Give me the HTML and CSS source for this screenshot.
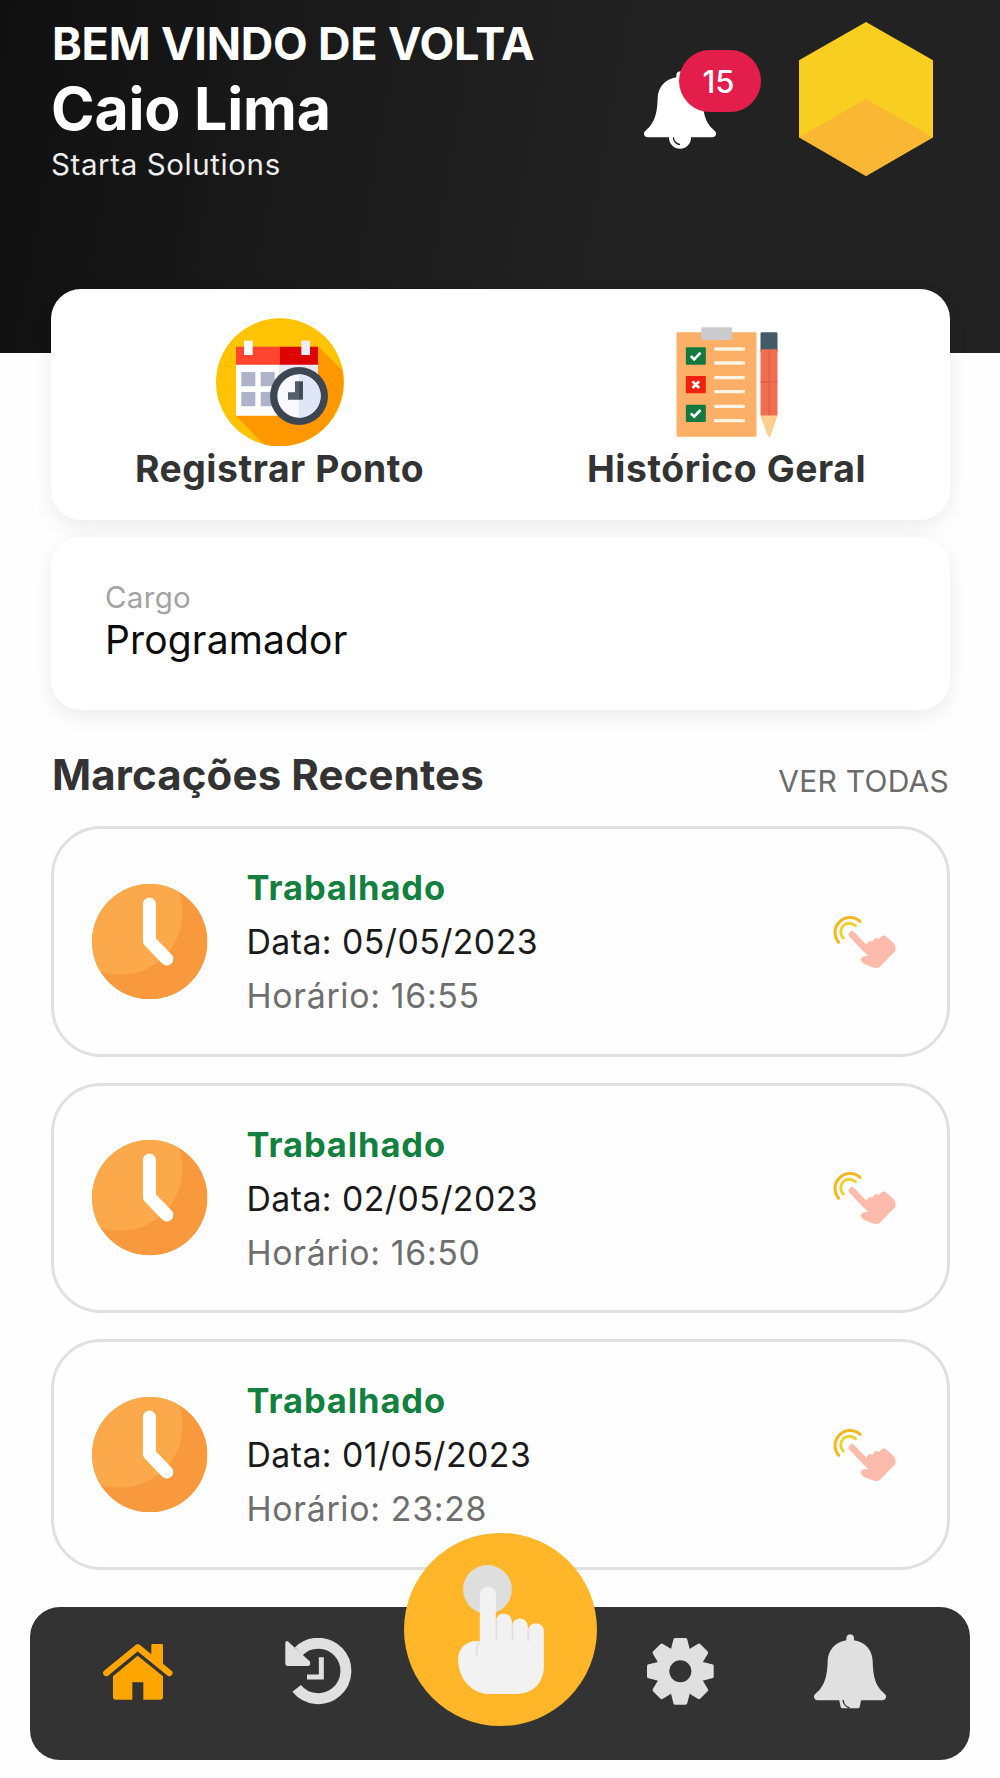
FILE: index.html
```html
<!DOCTYPE html>
<html lang="pt-BR">
<head>
<meta charset="utf-8">
<title>Starta Ponto</title>
<link rel="stylesheet" href="styles.css">
</head>
<body>
<svg class="sprite" width="0" height="0">
  <defs>
    <symbol id="clock" viewBox="96 190 346 346">
      <clipPath id="clock-face"><circle cx="269" cy="363" r="173"/></clipPath>
      <circle cx="269" cy="363" r="173" fill="#f9993d"/>
      <circle cx="180" cy="275" r="187" fill="#fca94c" clip-path="url(#clock-face)"/>
      <path d="M268 250V361L320 415" fill="none" stroke="#fff" stroke-width="39" stroke-linecap="round" stroke-linejoin="round"/>
    </symbol>
    <symbol id="tap" viewBox="156 162 194 166">
      <path d="M176 247A45 45 0 0 1 240 184" fill="none" stroke="#f3b722" stroke-width="9" stroke-linecap="round"/>
      <path d="M190 234A25 25 0 0 1 226 197" fill="none" stroke="#f0d02e" stroke-width="9" stroke-linecap="round"/>
      <path d="M216 224L265 275" stroke="#fdbcab" stroke-width="20" stroke-linecap="round"/>
      <path d="M255 262L263 247Q270 240 277 245L283 237Q290 231 297 237L303 230Q312 223 320 231L340 248Q351 262 344 275L300 320Q292 327 282 323L252 312Q240 305 243 295Q248 287 264 288Z" fill="#fdbcab"/>
    </symbol>
  </defs>
</svg>
<div class="screen">
  <header class="top">
    <div class="greeting">
      <div class="welcome">BEM VINDO DE VOLTA</div>
      <div class="name">Caio Lima</div>
      <div class="company">Starta Solutions</div>
    </div>
    <div class="alerts">
      <svg class="bell" viewBox="642 218 216 236">
        <path fill="#fff" d="M750 219c8 0 12 6 12 12v6c35 5 55 30 56 62c1 40 6 62 20 82c5 8 14 14 19 20c4 8-2 16-10 16H653c-8 0-14-8-10-16c5-6 14-12 19-20c14-20 20-42 21-82c1-32 22-57 56-62v-6c0-6 4-12 12-12Z"/>
        <circle cx="750" cy="418" r="33" fill="#fff"/>
        <path d="M730 417q2 18 20 22" fill="none" stroke="#222" stroke-width="4"/>
      </svg>
      <span class="badge">15</span>
    </div>
    <svg class="logo" viewBox="597 66 402 462">
      <path fill="#f8ce20" d="M798 66L999 181V412L798 528L597 412V181Z"/>
      <path fill="#fab733" d="M798 297L999 412L798 528L597 412Z"/>
    </svg>
  </header>

  <main class="content">
    <section class="card actions">
      <div class="action">
        <svg class="action-icon" viewBox="78 52 384 386">
          <circle cx="270" cy="245" r="192" fill="#ffc303"/>
          <path fill="#ff9800" d="M384 137L457 209A192 192 0 0 1 221 431L138 345Z"/>
          <path fill="#fff" d="M138 190H269V345H138Z"/>
          <path fill="#e9e9f5" d="M269 190H384V345H269Z"/>
          <path fill="#ff4530" d="M138 138H269V192H138Z"/>
          <path fill="#dd0300" d="M269 138H384V192H269Z"/>
          <path fill="#fff" d="M162 120H188V163H162Z"/>
          <path fill="#ececf8" d="M334 120H360V163H334Z"/>
          <path fill="#aeb2ca" d="M154 214H196V257H154ZM212 214H254V257H212ZM154 274H196V317H154ZM212 274H254V317H212Z"/>
          <circle cx="327" cy="286" r="87" fill="#3d4753"/>
          <circle cx="327" cy="286" r="65" fill="#f8f9ff"/>
          <path fill="#dfe6f8" d="M327 221A65 65 0 0 1 327 351Z"/>
          <path fill="#555d6a" d="M315 242H328V297H294V275H315Z"/>
          <path fill="#414a57" d="M327 242H339V297H327Z"/>
        </svg>
        <div class="action-label">Registrar Ponto</div>
      </div>
      <div class="action">
        <svg class="action-icon" viewBox="69.500 22 384 386">
          <rect x="110" y="65" width="240" height="313" rx="4" fill="#fcb067"/>
          <rect x="184" y="50" width="92" height="38" rx="3" fill="#c9cbcd"/>
          <rect x="138" y="110" width="60" height="52" rx="3" fill="#14793f"/>
          <rect x="138" y="196" width="60" height="52" rx="3" fill="#f0210f"/>
          <rect x="138" y="282" width="60" height="52" rx="3" fill="#14793f"/>
          <path fill="none" stroke="#fff" stroke-width="8" d="M153 136L163 146L182 126M153 308L163 318L182 298M158 212L178 232M178 212L158 232"/>
          <path stroke="#fff3e4" stroke-width="10" stroke-linecap="round" d="M227 115H311M227 157H311M227 201H311M227 243H311M227 287H311M227 330H311"/>
          <rect x="362" y="65" width="51" height="60" rx="4" fill="#455a68"/>
          <path fill="#f06e50" d="M362 116H413V315H362Z"/>
          <path fill="#fbcf8d" d="M362 315H413L392 376Q388 382 384 376Z"/>
          <path fill="none" stroke="#d85a41" stroke-width="3" d="M388 117V315M362 214H413"/>
        </svg>
        <div class="action-label">Histórico Geral</div>
      </div>
    </section>

    <section class="card role">
      <div class="role-label">Cargo</div>
      <div class="role-value">Programador</div>
    </section>

    <div class="section-head">
      <h2>Marcações Recentes</h2>
      <a class="see-all">VER TODAS</a>
    </div>

    <div class="list">
      <article class="entry">
        <svg class="clock"><use href="#clock"/></svg>
        <div class="info">
          <div class="status">Trabalhado</div>
          <div class="date">Data: 05/05/2023</div>
          <div class="time">Horário: 16:55</div>
        </div>
        <svg class="tap"><use href="#tap"/></svg>
      </article>
      <article class="entry">
        <svg class="clock"><use href="#clock"/></svg>
        <div class="info">
          <div class="status">Trabalhado</div>
          <div class="date">Data: 02/05/2023</div>
          <div class="time">Horário: 16:50</div>
        </div>
        <svg class="tap"><use href="#tap"/></svg>
      </article>
      <article class="entry">
        <svg class="clock"><use href="#clock"/></svg>
        <div class="info">
          <div class="status">Trabalhado</div>
          <div class="date">Data: 01/05/2023</div>
          <div class="time">Horário: 23:28</div>
        </div>
        <svg class="tap"><use href="#tap"/></svg>
      </article>
    </div>
  </main>

  <nav class="tabbar">
    <svg class="tab-home" viewBox="246 249 210 171" fill="#ffa500">
      <path d="M391 256q0-4 4-4h27q4 0 4 4V330L391 300Z"/>
      <path d="M350 287L426 349V411q0 8-8 8H367V367H334V419H284q-8 0-8-8V349Z"/>
      <path d="M250 352L350 270L451 352" fill="none" stroke="#333" stroke-width="16"/>
      <path d="M256 339L350 262L445 339" fill="none" stroke="#ffa500" stroke-width="19" stroke-linecap="round" stroke-linejoin="round"/>
    </svg>
    <svg class="tab-history" viewBox="796 235 200 200">
      <path d="M831 386A83 83 0 1 0 837 275" fill="none" stroke="#e0e0e0" stroke-width="33"/>
      <path fill="#e0e0e0" d="M797 250q1-9 9-4L870 305q5 13-5 14H804q-7 0-7-7Z"/>
      <path d="M905 293V352H862" fill="none" stroke="#e0e0e0" stroke-width="15"/>
    </svg>
    <svg class="fab" viewBox="72 40 578 578">
      <circle cx="361" cy="329" r="289" fill="#ffb629"/>
      <circle cx="322" cy="209" r="73" fill="#dedede"/>
      <path fill="#f2f2f2" d="M299 364V225a24 24 0 0 1 48 0V304a23.500 23.500 0 0 1 48 2V320a23.500 23.500 0 0 1 48 0V334a23.500 23.500 0 0 1 48 0V440c0 48-34 82-80 82H330c-52 0-96-42-96-105c0-38 32-58 65-53Z"/>
      <path fill="none" stroke="#dfdfdf" stroke-width="5" d="M349 300V362M397 318V362M444 333V362M297 368Q285 384 291 407"/>
    </svg>
    <svg class="tab-gear" viewBox="142 235 200 200">
      <defs><path id="tooth" d="M211 280L221 240q1-5 5-5h32q4 0 5 5L273 280Z"/></defs>
      <g fill="#e0e0e0">
        <use href="#tooth"/>
        <use href="#tooth" transform="rotate(45 242 335)"/>
        <use href="#tooth" transform="rotate(90 242 335)"/>
        <use href="#tooth" transform="rotate(135 242 335)"/>
        <use href="#tooth" transform="rotate(180 242 335)"/>
        <use href="#tooth" transform="rotate(225 242 335)"/>
        <use href="#tooth" transform="rotate(270 242 335)"/>
        <use href="#tooth" transform="rotate(315 242 335)"/>
        <circle cx="242" cy="335" r="68"/>
      </g>
      <circle cx="242" cy="335" r="33" fill="#333"/>
    </svg>
    <svg class="tab-bell" viewBox="642 218 216 224">
      <path fill="#e0e0e0" d="M750 219c8 0 12 6 12 12v6c35 5 55 30 56 62c1 40 6 62 20 82c5 8 14 14 19 20c4 8-2 16-10 16H653c-8 0-14-8-10-16c5-6 14-12 19-20c14-20 20-42 21-82c1-32 22-57 56-62v-6c0-6 4-12 12-12Z"/>
      <path fill="#e0e0e0" d="M717 414H784L779 437q-1 4-5 4H727q-4 0-5-4Z"/>
      <path d="M729 416q2 18 20 24" fill="none" stroke="#333" stroke-width="4"/>
    </svg>
  </nav>
</div>
</body>
</html>
```
FILE: styles.css
```css
* { box-sizing: border-box; }

body {
  margin: 0;
  background: #fefefe;
  font-family: Inter, "Liberation Sans", sans-serif;
  color: #333;
}

svg { display: block; flex: none; }
.sprite { position: absolute; }

.screen {
  width: 1000px;
  height: 1778px;
  display: flex;
  flex-direction: column;
}

.top {
  height: 353px;
  flex: none;
  display: flex;
  align-items: flex-start;
  padding: 18px 67px 0 51px;
  background: linear-gradient(100deg, #101010 0%, #191919 28%, #222 62%);
  color: #fff;
  white-space: nowrap;
}

.greeting { width: 593px; }
.welcome { padding-left: 1px; font-size: 45px; line-height: 52px; font-weight: 700; letter-spacing: -.2px; }
.name { margin-top: 6px; font-size: 59px; line-height: 66px; font-weight: 700; letter-spacing: -.2px; }
.company { margin-top: 4px; font-size: 29.500px; line-height: 36px; letter-spacing: .6px; color: #eee; }

.alerts { position: relative; margin-top: 53px; width: 72px; }
.bell { width: 72px; height: 78.700px; }
.badge {
  position: absolute;
  left: 35px;
  top: -21.500px;
  width: 82px;
  height: 62.500px;
  padding: 1px 3px 0 0;
  border-radius: 32px;
  background: #e41e4b;
  display: flex;
  align-items: center;
  justify-content: center;
  font-size: 31px;
  font-weight: 500;
}

.logo { width: 134px; height: 154px; margin: 4px 0 0 83px; }

.content { padding: 0 50px 0 51px; }

.card {
  background: #fff;
  border-radius: 30px;
  box-shadow: 0 6px 20px rgba(0, 0, 0, .08);
}

.actions {
  position: relative;
  margin-top: -64px;
  height: 230.500px;
  padding: 28.500px 0 0 5px;
  display: flex;
}
.action {
  width: 448px;
  display: flex;
  flex-direction: column;
  align-items: center;
}
.action-icon { width: 128px; height: 128.700px; }
.action-label { margin-top: 1px; font-size: 37.300px; line-height: 44px; font-weight: 700; letter-spacing: .55px; }

.role {
  position: relative;
  margin-top: 17.500px;
  height: 173px;
  padding: 42px 54px 0;
}
.role-label { font-size: 29.500px; line-height: 36px; letter-spacing: .3px; color: #a3a3a3; }
.role-value { margin-top: 1px; font-size: 39px; line-height: 48px; letter-spacing: .15px; color: #0c0c0c; }

.section-head {
  margin-top: 39.500px;
  height: 50px;
  padding: 0 1px;
  display: flex;
  align-items: flex-start;
  justify-content: space-between;
}
.section-head h2 { margin: 0; font-size: 42px; line-height: 50px; font-weight: 700; letter-spacing: .13px; }
.see-all { padding-top: 6px; font-size: 30px; line-height: 50px; letter-spacing: .25px; color: #6b6b6b; }

.list {
  margin-top: 26.500px;
  display: flex;
  flex-direction: column;
  gap: 26px;
}
.entry {
  height: 230.500px;
  border: 3px solid #e0e0e0;
  border-radius: 50px;
  padding: 0 50px 0 38px;
  display: flex;
  align-items: center;
}
.clock { width: 115.500px; height: 115.500px; }
.info { flex: 1; padding-top: 2px; margin-left: 39px; line-height: 54px; white-space: nowrap; }
.status { font-size: 34.500px; font-weight: 700; letter-spacing: .9px; color: #138040; }
.date { font-size: 33.800px; letter-spacing: .45px; color: #1a1a1a; }
.time { font-size: 33.800px; letter-spacing: .7px; color: #6e6e6e; }
.tap { width: 64.700px; height: 55.300px; }

.tabbar {
  position: relative;
  margin: 37px 30px 0;
  height: 153px;
  padding: 0 0 22.500px 17.500px;
  border-radius: 30px;
  background: #333;
  display: grid;
  grid-template-columns: 180.500px 181px 181px 181px 157px;
  align-items: center;
  justify-items: center;
}
.tab-home { width: 70px; height: 57px; }
.tab-history, .tab-gear { width: 66.700px; height: 66.700px; }
.tab-bell { width: 72px; height: 74.700px; }
.fab { width: 193px; height: 193px; margin: -125px 0 -41px 1px; }
```
